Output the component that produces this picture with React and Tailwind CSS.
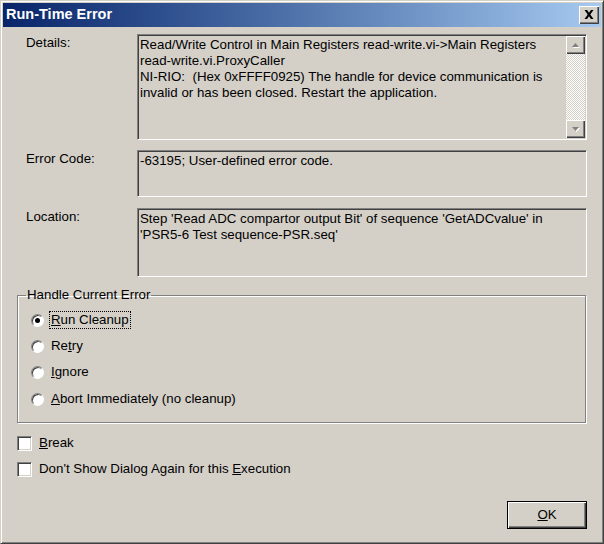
import React from 'react'

const sunken =
  'border border-t-[#808080] border-l-[#808080] border-b-white border-r-white shadow-[inset_1px_1px_0_#404040,inset_-1px_-1px_0_#d4d0c8]'
const raised =
  'bg-[#d4d0c8] shadow-[inset_1px_1px_0_#fff,inset_-1px_-1px_0_#404040,inset_-2px_-2px_0_#808080]'

function Arrow({ down }) {
  return (
    <svg width="9" height="6" viewBox="0 0 9 6" className="block">
      {down ? (
        <>
          <path d="M1 1h7L4.5 5z" fill="#fff" transform="translate(1,1)" />
          <path d="M1 1h7L4.5 5z" fill="#808080" />
        </>
      ) : (
        <>
          <path d="M1 5h7L4.5 1z" fill="#fff" transform="translate(1,1)" />
          <path d="M1 5h7L4.5 1z" fill="#808080" />
        </>
      )}
    </svg>
  )
}

function Radio({ checked, children, focus }) {
  return (
    <div className="flex h-[26px] items-center">
      <div className="ml-[13px] flex h-[13px] w-[13px] items-center justify-center rounded-full border border-t-[#808080] border-l-[#808080] border-b-white border-r-white bg-white shadow-[inset_1px_1px_0_#404040]">
        {checked && <div className="h-[5px] w-[5px] rounded-full bg-black" />}
      </div>
      <span
        className={
          'ml-[6px] px-[1px] leading-[16px] ' +
          (focus ? 'outline outline-1 outline-dotted outline-black' : '')
        }
      >
        {children}
      </span>
    </div>
  )
}

function Check({ children }) {
  return (
    <div className="flex h-[26px] items-center">
      <div className={'h-[15px] w-[15px] bg-white ' + sunken} />
      <span className="ml-[7px] leading-[16px]">{children}</span>
    </div>
  )
}

export default function App() {
  return (
    <div className="h-[544px] w-[604px] overflow-hidden bg-[#d4d0c8] font-['Liberation_Sans',Arial,sans-serif] text-[13.3px] text-black">
      <div className="flex h-full w-full flex-col border border-t-[#d4d0c8] border-l-[#d4d0c8] border-b-[#404040] border-r-[#404040] p-[2px] shadow-[inset_1px_1px_0_#fff,inset_-1px_-1px_0_#808080]">
        {/* Title bar */}
        <div className="flex h-[24px] shrink-0 items-center justify-between bg-linear-to-r from-[#0a246a] to-[#a6caf0] pl-[3px] pr-[2px]">
          <span className="text-[14.5px] font-bold text-white">Run-Time Error</span>
          <div className={'flex h-[18px] w-[20px] items-center justify-center ' + raised}>
            <svg width="10" height="9" viewBox="0 0 10 9" className="-mt-[1px]">
              <path d="M0.5 0h2.6l1.9 2.7L6.9 0h2.6L6.3 4.5 9.5 9H6.9L5 6.3 3.1 9H0.5l3.2-4.5z" fill="#000" />
            </svg>
          </div>
        </div>

        {/* Details */}
        <div className="mt-[7px] flex">
          <div className="w-[134px] shrink-0 pl-[23px] pt-[1px] leading-[16px]">Details:</div>
          <div className={'flex h-[106px] w-[450px] ' + sunken}>
            <div className="flex-1 whitespace-pre pl-[2px] pt-[2px] leading-[16px]">
              <div>Read/Write Control in Main Registers read-write.vi-&gt;Main Registers</div>
              <div>read-write.vi.ProxyCaller</div>
              <div>NI-RIO:  (Hex 0xFFFF0925) The handle for device communication is</div>
              <div>invalid or has been closed. Restart the application.</div>
            </div>
            <div className="m-[1px] flex w-[19px] flex-col">
              <div className={'flex h-[18px] items-center justify-center ' + raised}>
                <Arrow />
              </div>
              <div className="flex-1 bg-[repeating-conic-gradient(#ffffff_0_25%,#d4d0c8_0_50%)] bg-size-[2px_2px]" />
              <div className={'flex h-[18px] items-center justify-center ' + raised}>
                <Arrow down />
              </div>
            </div>
          </div>
        </div>

        {/* Error Code */}
        <div className="mt-[10px] flex">
          <div className="w-[134px] shrink-0 pl-[23px] pt-[1px] leading-[16px]">Error Code:</div>
          <div className={'h-[47px] w-[450px] pl-[2px] pt-[2px] leading-[16px] ' + sunken}>
            -63195; User-defined error code.
          </div>
        </div>

        {/* Location */}
        <div className="mt-[11px] flex">
          <div className="w-[134px] shrink-0 pl-[23px] pt-[1px] leading-[16px]">Location:</div>
          <div className={'h-[69px] w-[450px] whitespace-pre pl-[2px] pt-[2px] leading-[16px] ' + sunken}>
            <div>Step 'Read ADC compartor output Bit' of sequence 'GetADCvalue' in</div>
            <div>'PSR5-6 Test sequence-PSR.seq'</div>
          </div>
        </div>

        {/* Handle Current Error */}
        <fieldset className="mt-[10px] ml-[14px] mr-[15px] border border-[#808080] pb-[10px] pt-[4px] shadow-[1px_1px_0_#fff,inset_1px_1px_0_#fff]">
          <legend className="ml-[8px] px-[1px] leading-[16px]">Handle Current Error</legend>
          <Radio checked focus>
            <u>R</u>un Cleanup
          </Radio>
          <Radio>
            Re<u>t</u>ry
          </Radio>
          <Radio>
            <u>I</u>gnore
          </Radio>
          <div className="mt-[1px]">
            <Radio>
              <u>A</u>bort Immediately (no cleanup)
            </Radio>
          </div>
        </fieldset>

        {/* Options */}
        <div className="mt-[7px] ml-[14px] flex flex-col">
          <Check>
            <u>B</u>reak
          </Check>
          <Check>
            Don't Show Dialog Again for this <u>E</u>xecution
          </Check>
        </div>

        <div className="mt-[19px] mr-[14px] flex justify-end">
          <button className="flex h-[28px] w-[80px] items-center justify-center border border-black bg-[#d4d0c8] shadow-[inset_1px_1px_0_#fff,inset_-1px_-1px_0_#404040,inset_-2px_-2px_0_#808080]">
            <span>
              <u>O</u>K
            </span>
          </button>
        </div>
      </div>
    </div>
  )
}
